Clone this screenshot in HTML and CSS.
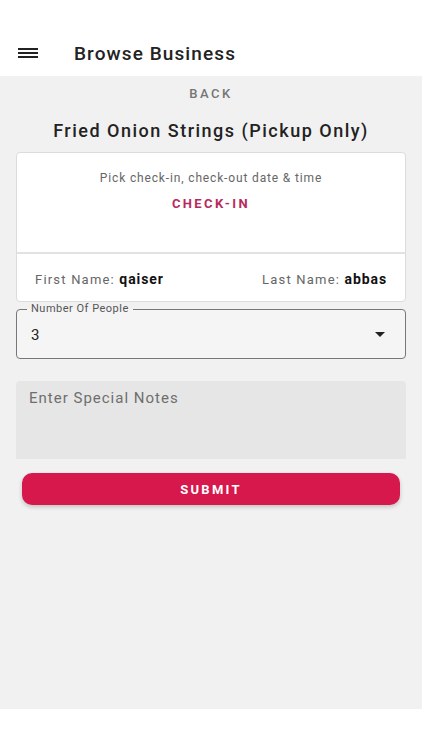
FILE: index.html
```html
<!DOCTYPE html>
<html lang="en">
<head>
  <meta charset="UTF-8">
  <meta name="viewport" content="width=device-width, initial-scale=1.0">
  <title>Browse Business</title>
  <link rel="stylesheet" href="styles.css">
</head>
<body>
  <div class="app">
    <header class="topbar">
      <svg class="menu" width="20" height="14" viewBox="0 0 20 14">
        <rect x="0" y="2" width="20" height="2" fill="#222"/>
        <rect x="0" y="6" width="20" height="2" fill="#222"/>
        <rect x="0" y="10" width="20" height="2" fill="#222"/>
      </svg>
      <h1>Browse Business</h1>
    </header>

    <main class="content">
      <button class="back">BACK</button>
      <h2>Fried Onion Strings (Pickup Only)</h2>

      <div class="card">
        <div class="card-top">
          <p class="hint">Pick check-in, check-out date &amp; time</p>
          <button class="checkin">CHECK-IN</button>
        </div>
        <div class="card-bottom">
          <span>First Name: <strong>qaiser</strong></span>
          <span>Last Name: <strong>abbas</strong></span>
        </div>
      </div>

      <div class="select">
        <span class="select-label">Number Of People</span>
        <span class="value">3</span>
        <svg width="10" height="5" viewBox="0 0 10 5"><path d="M0 0 L10 0 L5 5 Z" fill="#222"/></svg>
      </div>

      <div class="notes">Enter Special Notes</div>

      <button class="submit">SUBMIT</button>
    </main>
  </div>
</body>
</html>
```

FILE: styles.css
```css
body {
  margin: 0;
  font-family: Roboto, "Noto Sans", sans-serif;
  background: white;
  color: #222;
}
.app {
  width: 422px;
  height: 750px;
  display: flex;
  flex-direction: column;
}
.topbar {
  height: 76px;
  display: flex;
  align-items: center;
  padding: 30px 18px 0 18px;
  box-sizing: border-box;
  background: white;
}
.topbar .menu {
  margin-right: 36px;
}
.topbar h1 {
  margin: 0;
  font-size: 19px;
  font-weight: 500;
  letter-spacing: 1.1px;
}
.content {
  height: 633px;
  background: #f1f1f1;
  padding: 0 16px;
  display: flex;
  flex-direction: column;
  box-sizing: border-box;
}
.back {
  align-self: center;
  border: none;
  background: none;
  font-family: inherit;
  font-size: 13px;
  font-weight: 500;
  letter-spacing: 2.5px;
  color: #757575;
  margin-top: 9px;
  padding: 0;
  height: 17px;
}
h2 {
  margin: 17px 0 0 0;
  text-align: center;
  font-size: 18px;
  font-weight: 500;
  letter-spacing: 1.5px;
  line-height: 24px;
}
.card {
  margin-top: 9px;
  background: white;
  border: 1px solid #dcdcdc;
  border-radius: 4px;
}
.card-top {
  height: 101px;
  border-bottom: 2px solid #e2e2e2;
  display: flex;
  flex-direction: column;
  align-items: center;
  box-sizing: border-box;
  padding-top: 18px;
}
.hint {
  margin: 0;
  font-size: 12px;
  color: #666;
  letter-spacing: 0.85px;
}
.checkin {
  margin-top: 11px;
  border: none;
  background: none;
  padding: 0;
  font-family: inherit;
  font-size: 13px;
  font-weight: 700;
  letter-spacing: 2.4px;
  color: #b82a5e;
}
.card-bottom {
  height: 47px;
  display: flex;
  justify-content: space-between;
  align-items: center;
  padding: 2px 18px 0 18px;
  box-sizing: border-box;
  font-size: 13px;
  color: #666;
  letter-spacing: 1.2px;
}
.card-bottom strong {
  color: #111;
  font-size: 14px;
  letter-spacing: 0.9px;
}
.select {
  position: relative;
  margin-top: 7px;
  height: 50px;
  box-sizing: border-box;
  border: 1px solid #777;
  border-radius: 4px;
  padding: 0 20px 0 14px;
  display: flex;
  align-items: center;
  justify-content: space-between;
  background: #f5f5f5;
}
.select-label {
  position: absolute;
  top: -7px;
  left: 10px;
  padding: 0 4px;
  background: linear-gradient(#f1f1f1 50%, #f5f5f5 50%);
  font-size: 11px;
  line-height: 12px;
  color: #555;
  letter-spacing: 0.5px;
}
.select .value {
  font-size: 15px;
  margin-top: 2px;
}
.notes {
  margin-top: 22px;
  height: 78px;
  background: #e6e6e6;
  border-radius: 4px 4px 0 0;
  padding: 8px 13px;
  box-sizing: border-box;
  font-size: 15px;
  color: #6e6e6e;
  letter-spacing: 1px;
}
.submit {
  margin: 14px 6px 0 6px;
  height: 32px;
  border: none;
  border-radius: 10px;
  background: #d6184c;
  color: white;
  font-family: inherit;
  font-size: 13px;
  font-weight: 700;
  letter-spacing: 2.3px;
  box-shadow: 0 2px 4px rgba(0,0,0,0.2);
}
```
